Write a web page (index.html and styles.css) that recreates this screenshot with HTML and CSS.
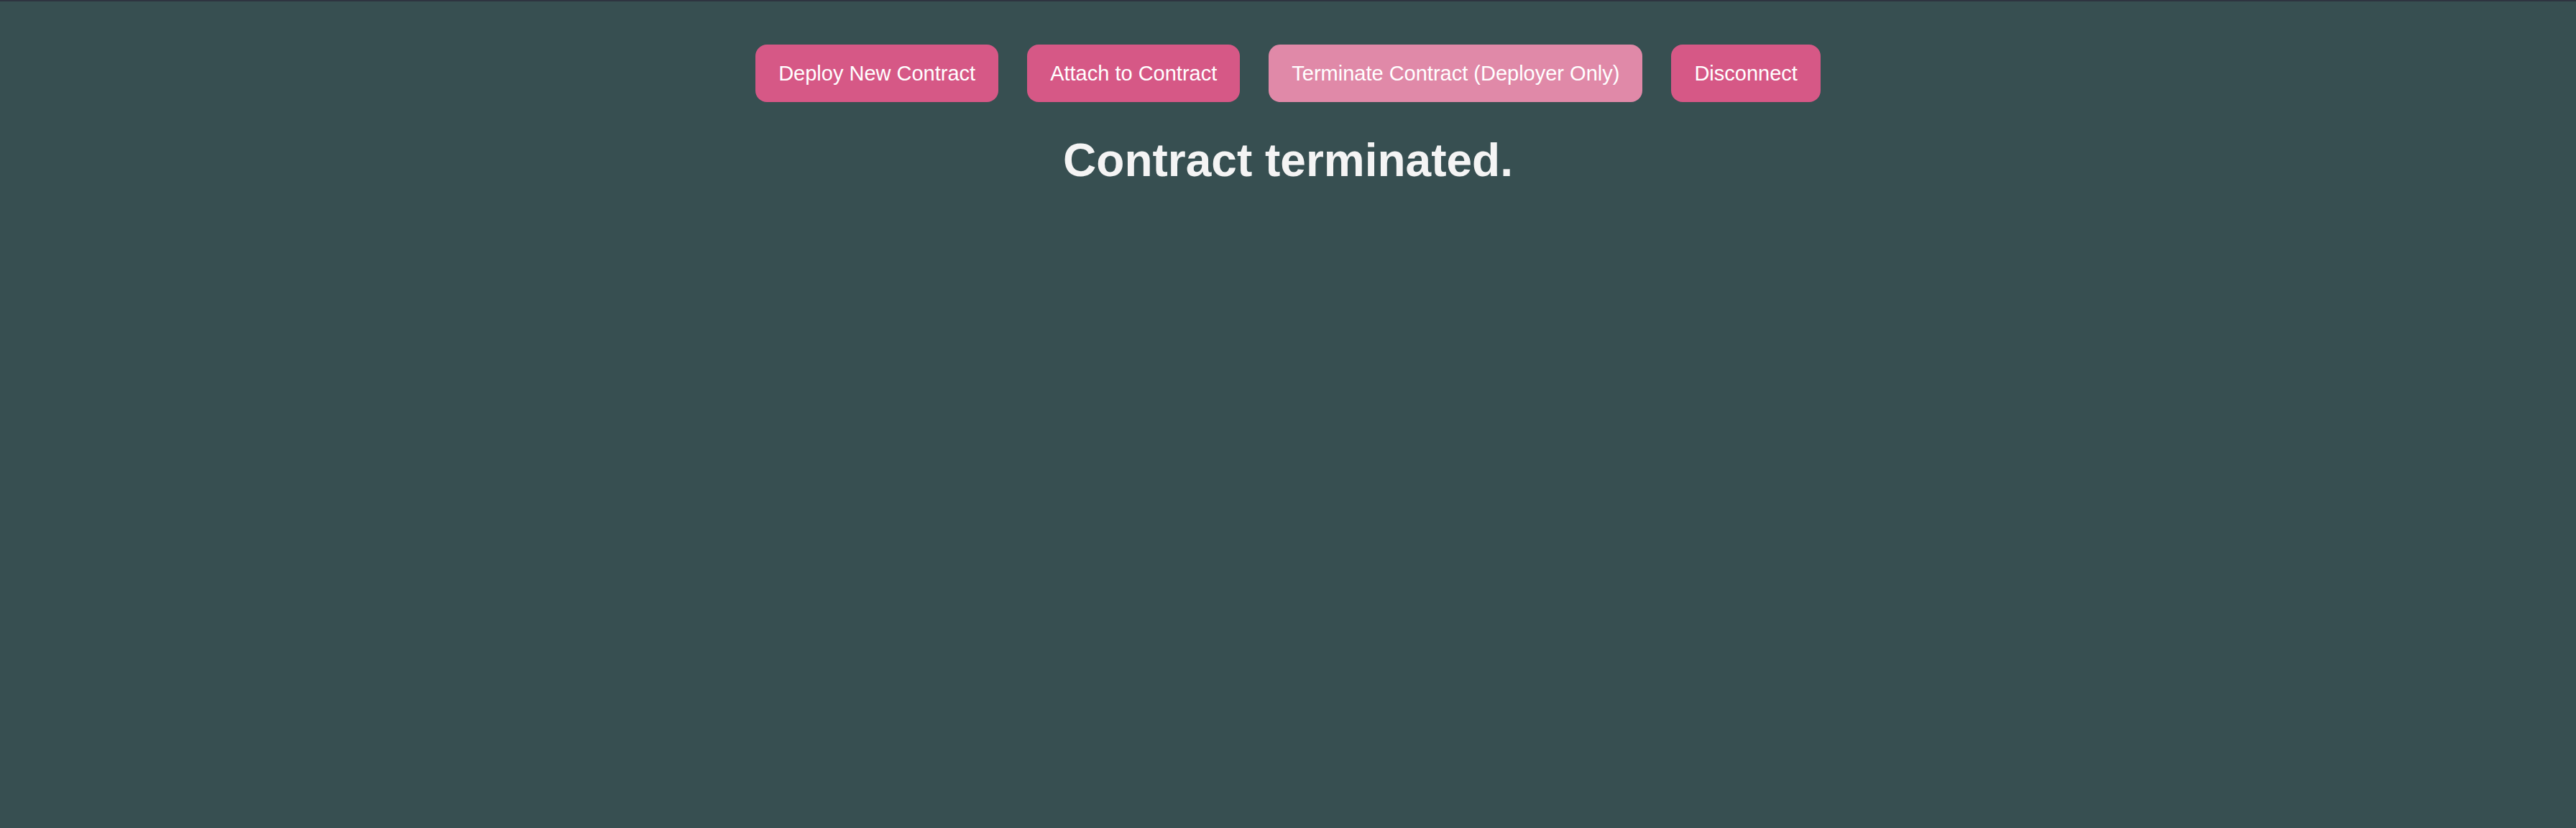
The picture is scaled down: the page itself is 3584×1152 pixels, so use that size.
FILE: index.html
```html
<!DOCTYPE html>
<html lang="en">
<head>
<meta charset="utf-8">
<title>Contract</title>
<link rel="stylesheet" href="styles.css">
</head>
<body>
<div class="page">
  <div class="actions">
    <button class="btn">Deploy New Contract</button>
    <button class="btn">Attach to Contract</button>
    <button class="btn btn-disabled" disabled>Terminate Contract (Deployer Only)</button>
    <button class="btn">Disconnect</button>
  </div>
  <h1 class="status">Contract terminated.</h1>
</div>
</body>
</html>
```

FILE: styles.css
```css
html, body {
  margin: 0;
  padding: 0;
  height: 100%;
}
body {
  background: #374f51;
  border-top: 2px solid #2e3440;
  box-sizing: border-box;
  font-family: "Liberation Sans", Arial, sans-serif;
}
.page {
  padding-top: 60px;
  display: flex;
  flex-direction: column;
  align-items: center;
}
.actions {
  display: flex;
  justify-content: center;
  gap: 40px;
}
.btn {
  font-family: "Liberation Sans", Arial, sans-serif;
  font-size: 29px;
  line-height: 32px;
  padding: 24px 32px;
  border: none;
  border-radius: 16px;
  background: #d65886;
  color: #ffffff;
  cursor: pointer;
}
.btn-disabled {
  background: #e089a8;
  cursor: default;
}
.status {
  margin: 44px 0 0;
  font-size: 64px;
  line-height: 74px;
  font-weight: bold;
  color: #f4f4f4;
}
```
